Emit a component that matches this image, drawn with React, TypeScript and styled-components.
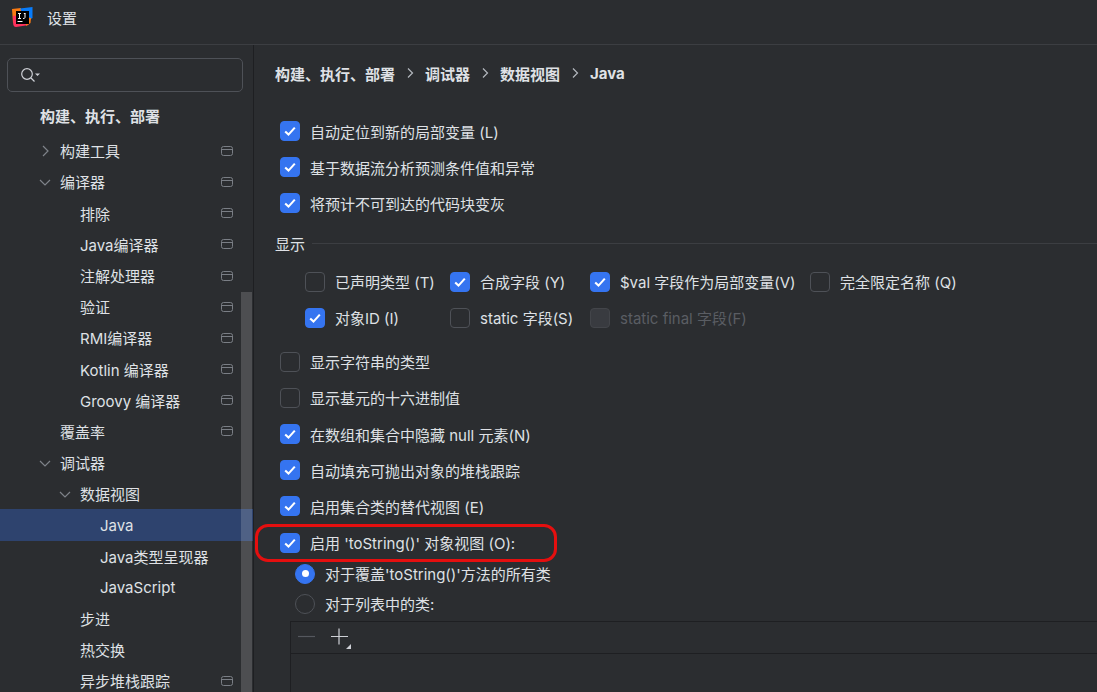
import React from "react";
import styled, { createGlobalStyle } from "styled-components";

const Global = createGlobalStyle`
  html, body { margin: 0; padding: 0; background: #2b2d30; }
  body { font-family: Inter, "Noto Sans CJK SC", sans-serif; font-size: 15px; color: #dfe1e5; }
`;

const Page = styled.div`
  width: 1097px; height: 692px; overflow: hidden; display: flex; flex-direction: column; background: #2b2d30;
`;
const TitleBar = styled.header`
  height: 34px; flex: none; display: flex; align-items: center; padding: 0 0 10px 12px; gap: 14px;
  border-bottom: 1px solid #3c3e42; color: #dfe1e5;
`;
const Body = styled.div`display: flex; flex: 1; min-height: 0;`;
const Sidebar = styled.aside`
  position: relative; width: 253px; flex: none; border-right: 1px solid #1e1f22; overflow: hidden;
  padding-top: 13px;
`;
const SearchBox = styled.div`
  width: 236px; height: 34px; margin-left: 7px; box-sizing: border-box; border: 1px solid #4e5157; border-radius: 5px;
  display: flex; align-items: center; padding-left: 12px;
`;
const Tree = styled.div`display: flex; flex-direction: column; margin-top: 8px;`;
const Row = styled.div<{ $level: number; $selected?: boolean; $bold?: boolean }>`
  height: 31.2px; flex: none; display: flex; align-items: center; position: relative;
  padding-left: ${(p) => p.$level}px; font-weight: ${(p) => (p.$bold ? 700 : 400)};
  margin-bottom: ${(p) => (p.$bold ? "4px" : "0")};
  background: ${(p) => (p.$selected ? "#2e436e" : "transparent")};
  color: #dfe1e5;
`;
const Arrow = styled.svg`position: absolute; margin-left: -21px; width: 12px; height: 12px;`;
const Pin = styled.svg`position: absolute; left: 221px; width: 12px; height: 12px;`;
const Scrollbar = styled.div`
  position: absolute; left: 241px; top: 247px; bottom: 0; width: 11px; background: rgba(255,255,255,0.16);
`;

const Content = styled.main`flex: 1; min-width: 0; padding: 0 0 0 21px; overflow: hidden;`;
const Breadcrumb = styled.nav`
  height: 32px; margin-top: 12px; display: flex; align-items: center; font-weight: 700; gap: 9px;
`;
const Sep = styled.svg`width: 12px; height: 12px;`;
const CheckColumn = styled.div`display: flex; flex-direction: column; padding-left: 5px;`;
const TopList = styled(CheckColumn)`margin-top: 24px;`;
const CheckRow = styled.div`position: relative; height: 36.2px; flex: none; display: flex; align-items: center; gap: 10px;`;
const Box = styled.span<{ $on?: boolean; $disabled?: boolean }>`
  width: 20px; height: 20px; box-sizing: border-box; border-radius: 4px; flex: none; display: inline-flex; align-items: center; justify-content: center;
  background: ${(p) => (p.$on ? "#3574f0" : p.$disabled ? "#393b40" : "#2b2d30")};
  border: 1px solid ${(p) => (p.$on ? "#3574f0" : p.$disabled ? "#43454a" : "#4e5157")};
`;
const Label = styled.span<{ $disabled?: boolean }>`
  white-space: nowrap; color: ${(p) => (p.$disabled ? "#5a5d63" : "#dfe1e5")};
`;
const Section = styled.div`display: flex; align-items: center; gap: 7px; height: 24px; margin-top: 10px;`;
const Rule = styled.div`flex: 1; height: 1px; background: #3c3e42;`;
const Grid = styled.div`
  display: grid; grid-template-columns: 145px 140px 220px auto; justify-content: start; grid-auto-rows: 36px;
  padding-left: 30px; margin-top: 8px; margin-bottom: 8px;
`;
const GridCell = styled.div`display: flex; align-items: center; gap: 10px;`;
const Highlight = styled.div`
  position: absolute; left: -25px; top: -1px; width: 302px; height: 38px; border: 3px solid #e50f0f; border-radius: 13px; box-sizing: border-box; pointer-events: none;
`;
const RadioRow = styled.div`height: 30px; display: flex; align-items: center; gap: 10px; padding-left: 20px;`;
const RadioList = styled.div`margin-top: -2px;`;
const Radio = styled.span<{ $on?: boolean }>`
  width: 20px; height: 20px; border-radius: 50%; box-sizing: border-box; flex: none; display: inline-flex; align-items: center; justify-content: center;
  background: ${(p) => (p.$on ? "#3574f0" : "#2b2d30")}; border: 1px solid ${(p) => (p.$on ? "#3574f0" : "#4e5157")};
  &::after { content: ""; width: 7px; height: 7px; border-radius: 50%; background: ${(p) => (p.$on ? "#fff" : "transparent")}; }
`;
const ListPanel = styled.div`
  margin: 2px 0 0 15px; border: 1px solid #1e1f22; border-right: none; height: 200px;
`;
const ListToolbar = styled.div`
  height: 31px; border-bottom: 1px solid #1e1f22; display: flex; align-items: center; padding-left: 6px; gap: 12px;
`;
const ToolIcon = styled.svg`width: 20px; height: 20px; flex: none; overflow: visible;`;

const Check = () => (
  <svg width="14" height="14" viewBox="0 0 14 14" fill="none">
    <path d="M2.2 7.4 L5.5 10.6 L11.8 3.6" stroke="#fff" strokeWidth="2.1" />
  </svg>
);
const CheckItem = ({ label, on }: { label: string; on?: boolean }) => (
  <CheckRow>
    <Box $on={on}>{on && <Check />}</Box>
    <Label>{label}</Label>
  </CheckRow>
);
const Cell = ({ label, on, disabled }: { label: string; on?: boolean; disabled?: boolean }) => (
  <GridCell>
    <Box $on={on} $disabled={disabled}>{on && <Check />}</Box>
    <Label $disabled={disabled}>{label}</Label>
  </GridCell>
);
const PinIcon = () => (
  <Pin viewBox="0 0 12 12" fill="none">
    <rect x="0.5" y="1.5" width="11" height="9" rx="2" stroke="#7a7e85" />
    <path d="M1 4.5H11" stroke="#7a7e85" />
  </Pin>
);
const Logo = () => (
  <svg width="21" height="21" viewBox="0 0 21 21">
    <path d="M0 2 L9 1 L9 14 L1 16 Z" fill="#f97a12" />
    <path d="M8 1.5 L20.5 0 L20.5 11 L15 14 Z" fill="#087cfa" />
    <path d="M1 9 L8 8 L17 18 L4 20 Q1.5 20 1.2 17 Z" fill="#fe315d" />
    <path d="M14 10 L19 11 L18.5 16 L14 19 Z" fill="#f97a12" />
    <rect x="4" y="4" width="13" height="13" fill="#000" />
    <rect x="5.5" y="14" width="5" height="1" fill="#fff" />
    <path d="M6 6.5H9M7.5 6.5V11.5M6 11.5H9M11.8 6.5H13.5M13 6.5V10.5Q13 11.5 11 11.5" stroke="#fff" strokeWidth="1" fill="none" />
  </svg>
);

type Item = { t: string; l: number; arrow?: "r" | "d"; pin?: boolean; sel?: boolean; bold?: boolean };
const items: Item[] = [
  { t: "构建、执行、部署", l: 40, bold: true },
  { t: "构建工具", l: 60, arrow: "r", pin: true },
  { t: "编译器", l: 60, arrow: "d", pin: true },
  { t: "排除", l: 80, pin: true },
  { t: "Java编译器", l: 80, pin: true },
  { t: "注解处理器", l: 80, pin: true },
  { t: "验证", l: 80, pin: true },
  { t: "RMI编译器", l: 80, pin: true },
  { t: "Kotlin 编译器", l: 80, pin: true },
  { t: "Groovy 编译器", l: 80, pin: true },
  { t: "覆盖率", l: 60, pin: true },
  { t: "调试器", l: 60, arrow: "d" },
  { t: "数据视图", l: 80, arrow: "d" },
  { t: "Java", l: 100, sel: true },
  { t: "Java类型呈现器", l: 100 },
  { t: "JavaScript", l: 100 },
  { t: "步进", l: 80 },
  { t: "热交换", l: 80 },
  { t: "异步堆栈跟踪", l: 80, pin: true },
];

const Chevron = () => (
  <Sep viewBox="0 0 12 12" fill="none"><path d="M4 1.5 L8.5 6 L4 10.5" stroke="#b4b8bf" strokeWidth="1.2" /></Sep>
);

export default function App() {
  return (
    <Page>
      <Global />
      <TitleBar>
        <Logo />
        <span>设置</span>
      </TitleBar>
      <Body>
        <Sidebar>
          <SearchBox>
            <svg width="22" height="16" viewBox="0 0 22 16" fill="none">
              <circle cx="7" cy="7" r="5.3" stroke="#ced0d6" strokeWidth="1.2" />
              <path d="M11 11 L14.5 14.5" stroke="#ced0d6" strokeWidth="1.2" />
              <path d="M15 6.5 H20 L17.5 9 Z" fill="#ced0d6" />
            </svg>
          </SearchBox>
          <Tree>
            {items.map((it) => (
              <Row key={it.t} $level={it.l} $selected={it.sel} $bold={it.bold}>
                {it.arrow && (
                  <Arrow viewBox="0 0 12 12" fill="none">
                    <path d={it.arrow === "r" ? "M4 1 L9 6 L4 11" : "M1 4 L6 9 L11 4"} stroke="#7f838a" strokeWidth="1.2" />
                  </Arrow>
                )}
                {it.t}
                {it.pin && <PinIcon />}
              </Row>
            ))}
          </Tree>
          <Scrollbar />
        </Sidebar>
        <Content>
          <Breadcrumb>
            <span>构建、执行、部署</span><Chevron />
            <span>调试器</span><Chevron />
            <span>数据视图</span><Chevron />
            <span>Java</span>
          </Breadcrumb>
          <TopList>
            <CheckItem on label="自动定位到新的局部变量 (L)" />
            <CheckItem on label="基于数据流分析预测条件值和异常" />
            <CheckItem on label="将预计不可到达的代码块变灰" />
          </TopList>
          <Section><span>显示</span><Rule /></Section>
          <Grid>
            <Cell label="已声明类型 (T)" />
            <Cell on label="合成字段 (Y)" />
            <Cell on label="$val 字段作为局部变量(V)" />
            <Cell label="完全限定名称 (Q)" />
            <Cell on label="对象ID (I)" />
            <Cell label="static 字段(S)" />
            <Cell disabled label="static final 字段(F)" />
          </Grid>
          <CheckColumn>
            <CheckItem label="显示字符串的类型" />
            <CheckItem label="显示基元的十六进制值" />
            <CheckItem on label="在数组和集合中隐藏 null 元素(N)" />
            <CheckItem on label="自动填充可抛出对象的堆栈跟踪" />
            <CheckItem on label="启用集合类的替代视图 (E)" />
            <CheckRow>
              <Box $on><Check /></Box>
              <Label>启用 'toString()' 对象视图 (O):</Label>
              <Highlight />
            </CheckRow>
          </CheckColumn>
          <RadioList>
            <RadioRow><Radio $on /><Label>对于覆盖'toString()'方法的所有类</Label></RadioRow>
            <RadioRow><Radio /><Label>对于列表中的类:</Label></RadioRow>
          </RadioList>
          <ListPanel>
            <ListToolbar>
              <ToolIcon viewBox="0 0 20 20" fill="none"><path d="M1 9.5H18" stroke="#55585e" strokeWidth="1.2" /></ToolIcon>
              <ToolIcon viewBox="0 0 20 20" fill="none">
                <path d="M2 9.5H19M10 1.5V17.5" stroke="#ced0d6" strokeWidth="1.2" />
                <path d="M22 17V22H17Z" fill="#ced0d6" />
              </ToolIcon>
            </ListToolbar>
          </ListPanel>
        </Content>
      </Body>
    </Page>
  );
}
